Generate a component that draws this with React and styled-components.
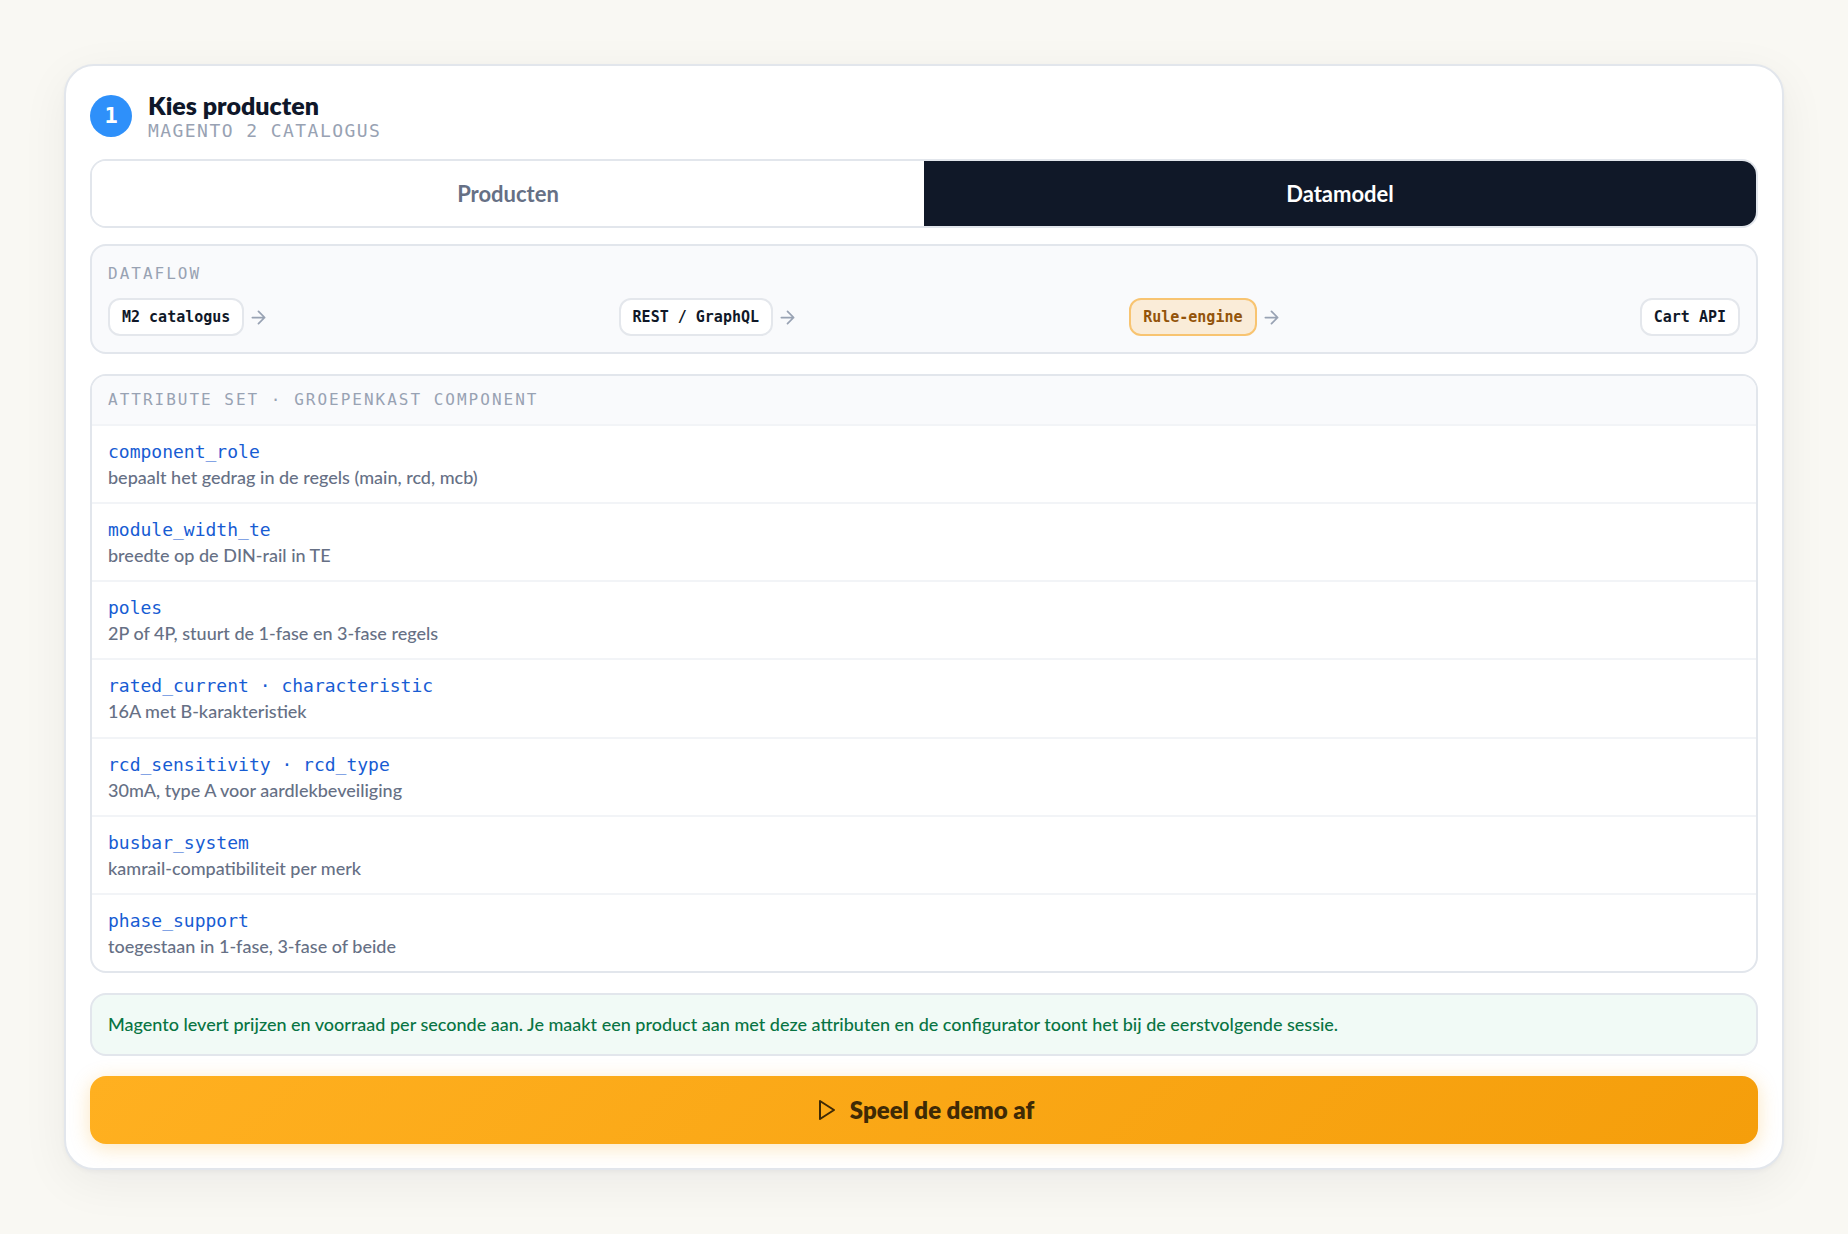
import React, { useState } from "react";
import styled, { createGlobalStyle, css } from "styled-components";

const SANS = '"Lato", "Open Sans", sans-serif';
const MONO = '"DejaVu Sans Mono", "Liberation Mono", monospace';

const GlobalStyle = createGlobalStyle`
  *, *::before, *::after { box-sizing: border-box; }
  body {
    margin: 0;
    background: #f9f8f3;
    color: #0f172a;
    font-family: ${SANS};
    -webkit-font-smoothing: antialiased;
  }
  button { font: inherit; cursor: pointer; }
`;

const Page = styled.main`
  display: flex;
  min-height: 100vh;
  padding: 64px;
`;

const Card = styled.section`
  flex: 1;
  min-width: 0;
  display: flex;
  flex-direction: column;
  gap: 20px;
  padding: 24px;
  background: #ffffff;
  border: 2px solid #e2e6ec;
  border-radius: 30px;
  box-shadow: 0 2px 4px rgba(15, 23, 42, 0.04), 0 12px 48px rgba(15, 23, 42, 0.06);
`;

const Top = styled.div`
  display: flex;
  flex-direction: column;
  gap: 16px;
`;

const Header = styled.header`
  display: flex;
  align-items: center;
  gap: 16px;
  padding-bottom: 1px;
`;

const Step = styled.span`
  display: grid;
  place-items: center;
  width: 42px;
  height: 42px;
  border-radius: 50%;
  background: #2e90fa;
  color: #ffffff;
  font: 700 22px/1 ${MONO};
`;

const Title = styled.h1`
  margin: 0;
  font-size: 25px;
  font-weight: 800;
  line-height: 30px;
`;

const label = css`
  margin: 0;
  color: #98a2b3;
  font-family: ${MONO};
  font-weight: 400;
  text-transform: uppercase;
`;

const Subtitle = styled.p`
  ${label}
  font-size: 18px;
  line-height: 22px;
  letter-spacing: 0.08em;
`;

const PanelLabel = styled.h2`
  ${label}
  font-size: 16px;
  line-height: 24px;
  letter-spacing: 2px;
`;

const Tabs = styled.div`
  display: flex;
  overflow: hidden;
  border: 2px solid #e2e6ec;
  border-radius: 16px;
`;

const Tab = styled.button`
  flex: 1;
  padding: 18px 16px;
  border: 0;
  background: ${(p) => (p.$active ? "#101828" : "#ffffff")};
  color: ${(p) => (p.$active ? "#ffffff" : "#667085")};
  font-size: 22px;
  font-weight: 700;
  line-height: 29px;
`;

const Panel = styled.section`
  border: 2px solid #e2e6ec;
  border-radius: 16px;
  overflow: hidden;
`;

const FlowPanel = styled(Panel)`
  display: flex;
  flex-direction: column;
  gap: 12px;
  padding: 16px;
  background: #f9fafc;
`;

const Flow = styled.ol`
  display: flex;
  margin: 0;
  padding: 0;
  list-style: none;
`;

const FlowStep = styled.li`
  display: flex;
  align-items: center;
  gap: 4px;
  flex: 1;
  &:last-child { flex: none; }
`;

const Chip = styled.span`
  padding: 6px 12px;
  border: 2px solid ${(p) => (p.$highlight ? "#f8c471" : "#e4e7ec")};
  border-radius: 12px;
  background: ${(p) => (p.$highlight ? "#faecd8" : "#ffffff")};
  color: ${(p) => (p.$highlight ? "#93540b" : "#101828")};
  font: 700 15px/22px ${MONO};
  white-space: nowrap;
`;

const AttributePanel = styled(Panel)`
  flex: 1;
  display: flex;
  flex-direction: column;
`;

const PanelHead = styled.div`
  padding: 12px 16px;
  border-bottom: 2px solid #f2f4f7;
  background: #f9fafc;
`;

const Attributes = styled.dl`
  flex: 1;
  display: flex;
  flex-direction: column;
  margin: 0;
`;

const Attribute = styled.div`
  flex: 1 0 auto;
  padding: 14px 16px 12px;
  & + & { border-top: 2px solid #f2f4f7; }
`;

const Name = styled.dt`
  color: #175cd3;
  font: 400 18px/24px ${MONO};
`;

const Description = styled.dd`
  margin: 0;
  color: #667085;
  font-size: 18px;
  font-weight: 500;
  line-height: 26px;
`;

const Note = styled.p`
  margin: 0;
  padding: 16px;
  border: 2px solid #e2e6ec;
  border-radius: 16px;
  background: #f1faf6;
  color: #087443;
  font-size: 18px;
  font-weight: 500;
  line-height: 27px;
`;

const PlayButton = styled.button`
  display: flex;
  align-items: center;
  justify-content: center;
  gap: 12px;
  padding: 18px;
  border: 0;
  border-radius: 16px;
  background: linear-gradient(135deg, #ffb020, #f59e0b);
  box-shadow: 0 4px 20px rgba(245, 158, 11, 0.26);
  color: #3f2a05;
  font-size: 24px;
  font-weight: 800;
  line-height: 32px;
`;

const ArrowIcon = () => (
  <svg width="21" height="21" viewBox="0 0 24 24" fill="none" stroke="#98a2b3" strokeWidth="2" strokeLinecap="round" strokeLinejoin="round" aria-hidden="true">
    <path d="M5 12h14M12 5l7 7-7 7" />
  </svg>
);

const PlayIcon = () => (
  <svg width="24" height="24" viewBox="0 0 24 24" fill="none" stroke="currentColor" strokeWidth="2" strokeLinejoin="round" aria-hidden="true">
    <path d="M6 3l14 9-14 9z" />
  </svg>
);

const tabs = ["Producten", "Datamodel"];

const flow = [
  { name: "M2 catalogus" },
  { name: "REST / GraphQL" },
  { name: "Rule-engine", highlight: true },
  { name: "Cart API" },
];

const attributes = [
  ["component_role", "bepaalt het gedrag in de regels (main, rcd, mcb)"],
  ["module_width_te", "breedte op de DIN-rail in TE"],
  ["poles", "2P of 4P, stuurt de 1-fase en 3-fase regels"],
  ["rated_current · characteristic", "16A met B-karakteristiek"],
  ["rcd_sensitivity · rcd_type", "30mA, type A voor aardlekbeveiliging"],
  ["busbar_system", "kamrail-compatibiliteit per merk"],
  ["phase_support", "toegestaan in 1-fase, 3-fase of beide"],
];

export default function App() {
  const [active, setActive] = useState("Datamodel");
  return (
    <>
      <GlobalStyle />
      <Page>
        <Card>
          <Top>
            <Header>
              <Step>1</Step>
              <div>
                <Title>Kies producten</Title>
                <Subtitle>Magento 2 catalogus</Subtitle>
              </div>
            </Header>
            <Tabs role="tablist">
              {tabs.map((t) => (
                <Tab key={t} type="button" role="tab" aria-selected={t === active} $active={t === active} onClick={() => setActive(t)}>
                  {t}
                </Tab>
              ))}
            </Tabs>
            <FlowPanel>
              <PanelLabel>Dataflow</PanelLabel>
              <Flow>
                {flow.map((step, i) => (
                  <FlowStep key={step.name}>
                    <Chip $highlight={step.highlight}>{step.name}</Chip>
                    {i < flow.length - 1 && <ArrowIcon />}
                  </FlowStep>
                ))}
              </Flow>
            </FlowPanel>
          </Top>
          <AttributePanel>
            <PanelHead>
              <PanelLabel>Attribute set · Groepenkast component</PanelLabel>
            </PanelHead>
            <Attributes>
              {attributes.map(([name, text]) => (
                <Attribute key={name}>
                  <Name>{name}</Name>
                  <Description>{text}</Description>
                </Attribute>
              ))}
            </Attributes>
          </AttributePanel>
          <Note>
            Magento levert prijzen en voorraad per seconde aan. Je maakt een product aan met deze attributen en de configurator toont het bij de eerstvolgende sessie.
          </Note>
          <PlayButton type="button">
            <PlayIcon />
            Speel de demo af
          </PlayButton>
        </Card>
      </Page>
    </>
  );
}
